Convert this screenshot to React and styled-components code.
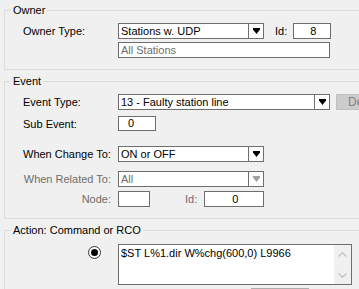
import React from 'react'
import styled, { createGlobalStyle } from 'styled-components'

const GlobalStyle = createGlobalStyle`
  html, body {
    margin: 0;
    background: #f0f0f0;
  }
  body {
    font-family: "Liberation Sans", Arial, sans-serif;
    font-size: 11px;
    color: #000;
  }
`

const ArrowDown = ({ disabled }) => (
  <svg width='7' height='6' viewBox='0 0 7 6'>
    <path d='M0 0h7v1.5L3.5 6 0 1.5z' fill={disabled ? '#a0a0a0' : '#000'} />
  </svg>
)

const Chevron = ({ up }) => (
  <svg width='9' height='5' viewBox='0 0 9 5'>
    <path
      d={up ? 'M0.5 4.5L4.5 0.8 8.5 4.5' : 'M0.5 0.5L4.5 4.2 8.5 0.5'}
      fill='none'
      stroke='#c0c0c0'
      strokeWidth='1.3'
    />
  </svg>
)

const Combo = ({ width, value, disabled }) => (
  <ComboBox $w={width}>
    <ComboText $disabled={disabled}>{value}</ComboText>
    <ComboButton>
      <ArrowDown disabled={disabled} />
    </ComboButton>
  </ComboBox>
)

const App = () => {
  return (
    <Screen>
      <GlobalStyle />

      <Group $top={0} $padTop={7} $padBottom={11}>
        <Legend>Owner</Legend>
        <Row>
          <Label>Owner Type:</Label>
          <Combo width={146} value='Stations w. UDP' />
          <InlineLabel $left={11} $right={6}>Id:</InlineLabel>
          <TextBox $w={38} $align='center'>8</TextBox>
        </Row>
        <Row $top={3}>
          <Label />
          <TextBox $w={212} $disabled>All Stations</TextBox>
        </Row>
      </Group>

      <Group $top={5} $padTop={7} $padBottom={11}>
        <Legend>Event</Legend>
        <Row>
          <Label>Event Type:</Label>
          <Combo width={212} value='13 - Faulty station line' />
          <GreyButton>Delete</GreyButton>
        </Row>
        <Row $top={6} $h={15}>
          <Label>Sub Event:</Label>
          <TextBox $w={38} $h={15} $pad={9}>0</TextBox>
        </Row>
        <Row $top={15}>
          <Label>When Change To:</Label>
          <Combo width={146} value='ON or OFF' />
        </Row>
        <Row $top={9}>
          <Label $right $disabled>When Related To:</Label>
          <Combo width={146} value='All' disabled />
        </Row>
        <Row $top={4}>
          <Label $right $disabled>Node:</Label>
          <TextBox $w={32} />
          <InlineLabel $left={35} $right={7} $disabled>Id:</InlineLabel>
          <TextBox $w={60} $align='center'>0</TextBox>
        </Row>
      </Group>

      <Group $top={5} $padTop={8} $padBottom={20}>
        <Legend>Action: Command or RCO</Legend>
        <Row $h={41} $align='flex-start'>
          <RadioCell>
            <Radio />
          </RadioCell>
          <CommandBox>
            <CommandText>$ST L%1.dir W%chg(600,0) L9966</CommandText>
            <ScrollBar>
              <Chevron up />
              <Chevron />
            </ScrollBar>
          </CommandBox>
        </Row>
        <Row $top={3} $h={20}>
          <BottomButton />
        </Row>
      </Group>
    </Screen>
  )
}

export default App

// Styles
const Screen = styled.div`
  width: 359px;
  height: 289px;
  overflow: hidden;
  padding: 4px 0 0 4px;
  box-sizing: border-box;
`

const Group = styled.fieldset`
  width: 400px;
  min-width: 0;
  box-sizing: border-box;
  margin: ${(p) => p.$top}px 0 0 0;
  padding: ${(p) => p.$padTop}px 6px ${(p) => p.$padBottom}px 18px;
  border: 1px solid #dcdcdc;
`

const Legend = styled.legend`
  margin-left: -12px;
  padding: 0 2px;
  font-size: 11px;
  line-height: 12px;
`

const Row = styled.div`
  display: flex;
  align-items: ${(p) => p.$align || 'center'};
  height: ${(p) => p.$h || 16}px;
  margin-top: ${(p) => p.$top || 0}px;
`

const Label = styled.div`
  width: 95px;
  flex: none;
  box-sizing: border-box;
  padding-right: ${(p) => (p.$right ? 7 : 0)}px;
  text-align: ${(p) => (p.$right ? 'right' : 'left')};
  color: ${(p) => (p.$disabled ? '#6d6d6d' : '#000')};
  white-space: nowrap;
`

const InlineLabel = styled.div`
  margin: 0 ${(p) => p.$right}px 0 ${(p) => p.$left}px;
  color: ${(p) => (p.$disabled ? '#6d6d6d' : '#000')};
`

const ComboBox = styled.div`
  display: flex;
  flex: none;
  width: ${(p) => p.$w}px;
  height: 16px;
  box-sizing: border-box;
  border: 1px solid #6e6e6e;
  background: #fff;
`

const ComboText = styled.div`
  flex: 1;
  padding-left: 2px;
  line-height: 14px;
  color: ${(p) => (p.$disabled ? '#6d6d6d' : '#000')};
  white-space: nowrap;
  overflow: hidden;
`

const ComboButton = styled.div`
  width: 14px;
  display: flex;
  align-items: center;
  justify-content: center;
  border-left: 1px solid #6e6e6e;
`

const TextBox = styled.div`
  flex: none;
  width: ${(p) => p.$w}px;
  height: ${(p) => p.$h || 16}px;
  box-sizing: border-box;
  border: 1px solid #6e6e6e;
  background: #fff;
  padding-left: ${(p) => p.$pad || 2}px;
  line-height: ${(p) => (p.$h || 16) - 2}px;
  text-align: ${(p) => p.$align || 'left'};
  color: ${(p) => (p.$disabled ? '#6d6d6d' : '#000')};
  white-space: nowrap;
`

const GreyButton = styled.div`
  flex: none;
  margin-left: 6px;
  width: 75px;
  height: 16px;
  box-sizing: border-box;
  border: 1px solid #bfbfbf;
  background: #cccccc;
  color: #838383;
  line-height: 14px;
  padding-left: 11px;
  font-size: 12px;
`

const RadioCell = styled.div`
  width: 95px;
  flex: none;
  display: flex;
  justify-content: flex-end;
  padding: 2px 17px 0 0;
  box-sizing: border-box;
`

const Radio = styled.span`
  width: 13px;
  height: 13px;
  box-sizing: border-box;
  border-radius: 50%;
  border: 1px solid #333;
  background: #fff;
  display: flex;
  align-items: center;
  justify-content: center;

  &::after {
    content: '';
    width: 7px;
    height: 7px;
    border-radius: 50%;
    background: #000;
  }
`

const CommandBox = styled.div`
  display: flex;
  width: 234px;
  height: 41px;
  box-sizing: border-box;
  border: 1px solid #6e6e6e;
  background: #fff;
`

const CommandText = styled.div`
  flex: 1;
  padding: 2px 0 0 2px;
  line-height: 13px;
  white-space: nowrap;
`

const ScrollBar = styled.div`
  width: 17px;
  display: flex;
  flex-direction: column;
  justify-content: space-between;
  align-items: center;
  padding: 7px 0 6px;
  box-sizing: border-box;
  background: #f0f0f0;
`

const BottomButton = styled.div`
  margin-left: 228px;
  width: 58px;
  height: 20px;
  box-sizing: border-box;
  border: 1px solid #adadad;
  background: #e1e1e1;
`
